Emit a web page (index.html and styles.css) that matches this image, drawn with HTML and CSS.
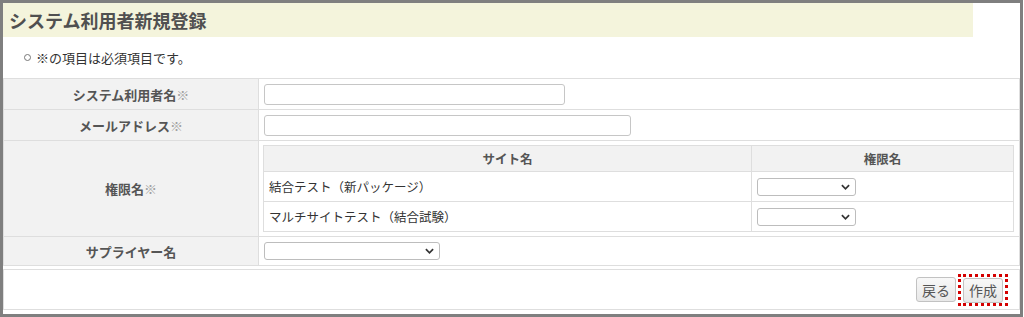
FILE: index.html
```html
<!DOCTYPE html>
<html lang="ja">
<head>
<meta charset="utf-8">
<title>システム利用者新規登録</title>
<link rel="stylesheet" href="styles.css">
</head>
<body>
<div class="frame">
  <h1 class="page-title">システム利用者新規登録</h1>
  <ul class="notes"><li>※の項目は必須項目です。</li></ul>
  <table class="form">
    <colgroup><col class="col-label"><col></colgroup>
    <tr class="r1">
      <th>システム利用者名<span class="req">※</span></th>
      <td class="field"><input class="text w300" type="text"></td>
    </tr>
    <tr class="r2">
      <th>メールアドレス<span class="req">※</span></th>
      <td class="field"><input class="text w366" type="text"></td>
    </tr>
    <tr class="r3">
      <th>権限名<span class="req">※</span></th>
      <td class="nested-cell">
        <table class="sub">
          <colgroup><col class="col-site"><col></colgroup>
          <tr class="sub-head"><th>サイト名</th><th>権限名</th></tr>
          <tr class="sub-row">
            <td>結合テスト（新パッケージ）</td>
            <td><span class="sel w99"><select></select><svg class="chev" viewBox="0 0 10 6" width="9" height="6"><path d="M1 1 L5 5 L9 1" fill="none" stroke="#333" stroke-width="1.9"/></svg></span></td>
          </tr>
          <tr class="sub-row">
            <td>マルチサイトテスト（結合試験）</td>
            <td><span class="sel w99"><select></select><svg class="chev" viewBox="0 0 10 6" width="9" height="6"><path d="M1 1 L5 5 L9 1" fill="none" stroke="#333" stroke-width="1.9"/></svg></span></td>
          </tr>
        </table>
      </td>
    </tr>
    <tr class="r4">
      <th>サプライヤー名</th>
      <td class="field"><span class="sel w176"><select></select><svg class="chev" viewBox="0 0 10 6" width="9" height="6"><path d="M1 1 L5 5 L9 1" fill="none" stroke="#333" stroke-width="1.9"/></svg></span></td>
    </tr>
  </table>
  <div class="actions">
    <button class="btn" type="button">戻る</button>
    <span class="focus-ring"><button class="btn" type="button">作成</button></span>
  </div>
</div>
</body>
</html>
```
FILE: styles.css
```css
* { box-sizing: border-box; }
html, body { margin: 0; padding: 0; background: #fff; }
body {
  font-family: "Noto Sans CJK JP", "Noto Sans", sans-serif;
  color: #333;
  font-size: 13px;
}
.frame {
  width: 1023px;
  height: 317px;
  border: 3px solid #7f7f7f;
  overflow: hidden;
}
.page-title {
  margin: 0;
  width: 970px;
  height: 34px;
  background: #f4f4dc;
  font-size: 18px;
  font-weight: bold;
  color: #505050;
  line-height: 34px;
  padding-left: 6px;
}
.notes {
  margin: 0;
  height: 41px;
  padding: 12px 0 0 21px;
  list-style: none;
  line-height: 18px;
  font-size: 13px;
  color: #333;
}
.notes li::before {
  content: "";
  display: inline-block;
  width: 5px;
  height: 5px;
  border: 1px solid #777;
  border-radius: 50%;
  margin-right: 5px;
  vertical-align: 2px;
}
.form {
  width: 100%;
  border-collapse: collapse;
  border: 1px solid #dedede;
}
.col-label { width: 255px; }
.form > tbody > tr > th,
.form > tbody > tr > td {
  border: 1px solid #dedede;
  padding: 0;
  vertical-align: middle;
}
.form > tbody > tr > th {
  background: #f2f2f2;
  color: #555;
  font-weight: bold;
  font-size: 13px;
  text-align: center;
}
.req { color: #a0a0a0; }
.form .field { padding-left: 5px; }
.r1 > * { height: 31px; }
.r2 > * { height: 31px; }
.r3 > * { height: 94px; }
.r4 > * { height: 29px; }
.text {
  display: block;
  height: 21px;
  border: 1px solid #c6c6c6;
  border-radius: 3px;
  background: #fff;
  padding: 0 4px;
  margin: 0;
}
.w300 { width: 301px; }
.w366 { width: 367px; }
.form .nested-cell { padding: 4px 5px 4px 4px; }
.sub {
  width: 100%;
  border-collapse: collapse;
}
.col-site { width: 488px; }
.sub th, .sub td {
  border: 1px solid #dedede;
  padding: 0 0 0 5px;
  vertical-align: middle;
}
.sub-head th {
  height: 26px;
  background: #f2f2f2;
  color: #555;
  font-weight: bold;
  font-size: 12.5px;
  text-align: center;
  padding: 0;
}
.sub-row td {
  height: 30px;
  font-size: 12.5px;
  color: #333;
}
.sel {
  position: relative;
  display: block;
  height: 18px;
}
.sel select {
  appearance: none;
  -webkit-appearance: none;
  display: block;
  width: 100%;
  height: 18px;
  margin: 0;
  border: 1px solid #bdbdbd;
  border-radius: 3px;
  background: #fff;
}
.sel .chev {
  position: absolute;
  right: 6px;
  top: 6px;
  pointer-events: none;
}
.w99 { width: 99px; }
.w176 { width: 176px; }
.actions {
  margin-top: 3px;
  height: 41px;
  border: 1px solid #dedede;
  display: flex;
  justify-content: flex-end;
  align-items: center;
  gap: 2px;
  padding-right: 11px;
}
.btn {
  height: 25px;
  width: 40px;
  padding: 0;
  margin: 0;
  border: 1px solid #c2c2c2;
  border-radius: 3px;
  background: linear-gradient(#f8f8f8, #e8e8e8);
  font-family: "Noto Sans CJK JP", "Noto Sans", sans-serif;
  font-size: 14px;
  color: #555;
}
.focus-ring {
  display: flex;
  align-items: center;
  border: 3px dotted #d40000;
  padding: 1px 2px 0 2px;
}
```
